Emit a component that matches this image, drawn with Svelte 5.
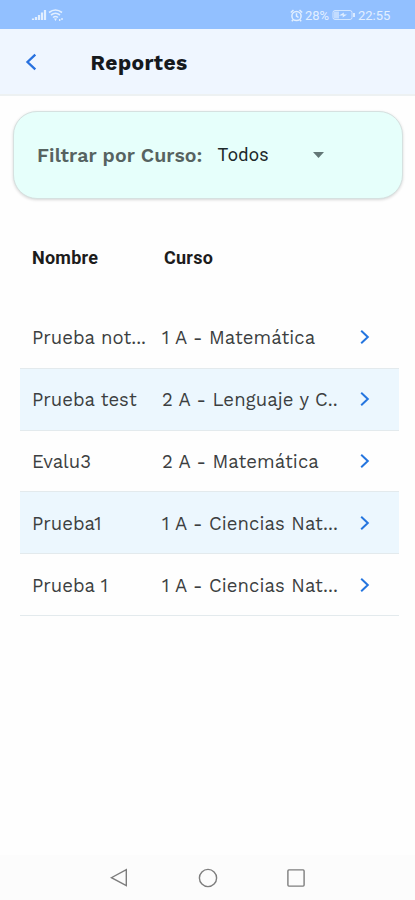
<script lang="ts">
	interface Report {
		name: string;
		course: string;
	}

	const reports: Report[] = [
		{ name: 'Prueba not...', course: '1 A - Matemática' },
		{ name: 'Prueba test', course: '2 A - Lenguaje y C..' },
		{ name: 'Evalu3', course: '2 A - Matemática' },
		{ name: 'Prueba1', course: '1 A - Ciencias Nat...' },
		{ name: 'Prueba 1', course: '1 A - Ciencias Nat...' }
	];
</script>

<div class="screen">
	<div class="status">
		<svg class="network" width="34" height="14" viewBox="0 0 34 14" aria-hidden="true">
			<path d="M2 12v-1.5M5 12V9M8 12V7M11 12V4.5M14 12V2" stroke="currentColor" stroke-width="2.2" />
			<g fill="none" stroke="currentColor" stroke-width="1.6">
				<path d="M18 4.5Q24.5-.5 31 4.5M20 7Q24.5 3.5 29 7M22 9.5q2.5-2 5 0" />
			</g>
			<path d="M23 10.5h3L24.5 13zM28 11h1.4v2H28zM30.3 10h1.4v2h-1.4z" fill="currentColor" />
		</svg>
		<div class="power">
			<svg width="13" height="13" viewBox="0 0 13 13" fill="none" stroke="currentColor" stroke-width="1.5" aria-hidden="true">
				<circle cx="6.5" cy="7" r="4.6" />
				<path d="M6.5 4.2V7l2 1.5M.8 3.5 3.5 1M9.5 1l2.7 2.5M3.2 10.7l-1.4 1.5M9.8 10.7l1.4 1.5" />
			</svg>
			<span class="percent">28%</span>
			<svg class="battery" width="24" height="12" viewBox="0 0 24 12" aria-hidden="true">
				<rect x="1" y="1.5" width="19" height="9" rx="2" fill="none" stroke="currentColor" opacity=".8" />
				<rect x="2" y="2.5" width="5" height="7" fill="currentColor" opacity=".6" />
				<path d="m7 6.5 5-3-.5 2H15l-4.5 3 .5-2z" fill="currentColor" />
				<path d="M22 4v4" stroke="currentColor" stroke-width="1.8" />
			</svg>
			<span class="clock">22:55</span>
		</div>
	</div>

	<header>
		<button class="back" aria-label="Volver">
			<svg width="12" height="18" viewBox="0 0 12 18" fill="none" stroke="currentColor" stroke-width="2.3">
				<path d="M10.3 1.7 2.5 9l7.8 7.3" />
			</svg>
		</button>
		<h1>Reportes</h1>
	</header>

	<main>
		<section class="filter">
			<span class="label">Filtrar por Curso:</span>
			<button class="select">
				<span>Todos</span>
				<svg width="11" height="6" viewBox="0 0 11 6" aria-hidden="true">
					<path d="M0 0h11L5.5 6z" fill="currentColor" />
				</svg>
			</button>
		</section>

		<section class="table">
			<div class="head">
				<span>Nombre</span>
				<span>Curso</span>
			</div>
			{#each reports as report, i (i)}
				<div class="row" class:odd={i % 2 === 1}>
					<span class="name">{report.name}</span>
					<span class="course">{report.course}</span>
					<svg class="chevron" width="10" height="16" viewBox="0 0 10 16" fill="none" stroke="currentColor" stroke-width="2" aria-hidden="true">
						<path d="m1.2 1.8 6.6 6.2-6.6 6.2" />
					</svg>
				</div>
			{/each}
		</section>
	</main>

	<nav>
		<svg width="20" height="20" viewBox="0 0 20 20"><path d="M16.3 1.7v16L1.4 9.7z" /></svg>
		<svg width="20" height="20" viewBox="0 0 20 20"><circle cx="10" cy="10" r="8.6" /></svg>
		<svg width="20" height="20" viewBox="0 0 20 20"><rect x="1.9" y="1.9" width="16.2" height="16.2" rx="1" /></svg>
	</nav>
</div>

<style>
	:global(body) {
		background: #fff;
	}
	.screen {
		display: flex;
		flex-direction: column;
		height: 900px;
		box-sizing: border-box;
		overflow: hidden;
		font-family: 'Work Sans', Inter, sans-serif;
		background: #fefefe;
		color: #3c3f41;
	}
	button {
		padding: 0;
		border: 0;
		background: none;
		font: inherit;
		color: inherit;
		text-align: left;
	}
	svg {
		flex-shrink: 0;
	}
	.status {
		display: flex;
		justify-content: space-between;
		align-items: center;
		height: 29px;
		box-sizing: border-box;
		padding: 1px 24px 0 31px;
		background: #92c0ff;
		color: #e2efff;
		font-family: Roboto, sans-serif;
		font-size: 13px;
	}
	.power {
		display: flex;
		align-items: center;
	}
	.percent {
		width: 26px;
		margin-left: 2px;
	}
	.battery {
		margin: 0 2px 0 1px;
	}
	.clock {
		width: 33px;
	}
	header {
		display: flex;
		align-items: center;
		height: 67px;
		box-sizing: border-box;
		padding: 1px 0 0 25px;
		background: #eff6ff;
		border-bottom: 2px solid #edf1f2;
	}
	.back {
		display: flex;
		width: 65.5px;
		color: #2871df;
	}
	h1 {
		margin: 0;
		font-size: 21px;
		font-weight: 700;
		letter-spacing: 0.45px;
		color: #16191d;
	}
	main {
		flex: 1;
		padding: 15px 12px 0 13px;
	}
	.filter {
		display: flex;
		align-items: center;
		height: 88px;
		box-sizing: border-box;
		padding: 0 0 1px 23px;
		border: 1px solid #d6e1e0;
		border-radius: 24px;
		background: #e6fffb;
		box-shadow: 0 1px 3px rgba(0, 0, 0, 0.16);
	}
	.label {
		width: 180.5px;
		padding-top: 2px;
		font-size: 19.5px;
		font-weight: 600;
		letter-spacing: 0.1px;
		color: #566361;
		white-space: nowrap;
	}
	.select {
		display: flex;
		align-items: center;
		justify-content: space-between;
		width: 106.5px;
		font-family: Roboto, sans-serif;
		font-size: 18px;
		letter-spacing: 0.3px;
		color: #1e2a2b;
	}
	.select svg {
		color: #637776;
	}
	.table {
		margin: 0 4px 0 7px;
	}
	.head {
		display: grid;
		grid-template-columns: 132px 1fr;
		align-items: center;
		height: 108px;
		box-sizing: border-box;
		padding: 9px 0 0 12px;
		font-family: Roboto, sans-serif;
		font-size: 18px;
		font-weight: 700;
		letter-spacing: 0.25px;
		color: #1c1c1c;
	}
	.row {
		display: grid;
		grid-template-columns: 130px 198px auto;
		align-items: center;
		height: 61.8px;
		box-sizing: border-box;
		padding-left: 12px;
		border-bottom: 1px solid #e3eaed;
		font-size: 18.5px;
		white-space: nowrap;
	}
	.row.odd {
		background: #ecf7fe;
	}
	.name {
		padding-top: 1px;
		letter-spacing: 0.02px;
	}
	.course {
		padding-top: 1px;
		letter-spacing: 0.1px;
	}
	.chevron {
		color: #2475df;
	}
	nav {
		display: flex;
		justify-content: center;
		align-items: center;
		gap: 68px;
		height: 45px;
		background: #fcfcfc;
	}
	nav svg {
		fill: none;
		stroke: #7d7d7d;
		stroke-width: 1.4;
	}
</style>
